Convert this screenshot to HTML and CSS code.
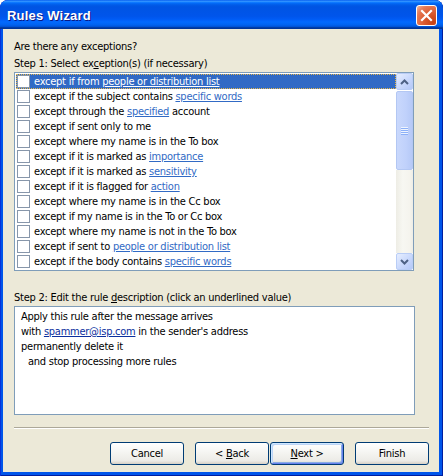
FILE: index.html
```html
<!DOCTYPE html>
<html>
<head>
<meta charset="utf-8">
<title>Rules Wizard</title>
<link rel="stylesheet" href="styles.css">
</head>
<body>
<div class="window">
  <div class="titlebar">
    <span class="title">Rules Wizard</span>
    <div class="close">
      <svg width="13" height="13" viewBox="0 0 13 13"><path d="M2 2 L11 11 M11 2 L2 11" stroke="#fff" stroke-width="2.2" stroke-linecap="square"/></svg>
    </div>
  </div>
  <div class="client">
    <div class="label first">Are there any exceptions?</div>
    <div class="label step1">Step 1: Select ex<u>c</u>eption(s) (if necessary)</div>
    <div class="listbox">
      <ul class="rows">
        <li class="row selected"><span class="check"></span><span class="text">except if from <span class="link">people or distribution list</span></span></li>
        <li class="row"><span class="check"></span><span class="text">except if the subject contains <span class="link">specific words</span></span></li>
        <li class="row"><span class="check"></span><span class="text">except through the <span class="link">specified</span> account</span></li>
        <li class="row"><span class="check"></span><span class="text">except if sent only to me</span></li>
        <li class="row"><span class="check"></span><span class="text">except where my name is in the To box</span></li>
        <li class="row"><span class="check"></span><span class="text">except if it is marked as <span class="link">importance</span></span></li>
        <li class="row"><span class="check"></span><span class="text">except if it is marked as <span class="link">sensitivity</span></span></li>
        <li class="row"><span class="check"></span><span class="text">except if it is flagged for <span class="link">action</span></span></li>
        <li class="row"><span class="check"></span><span class="text">except where my name is in the Cc box</span></li>
        <li class="row"><span class="check"></span><span class="text">except if my name is in the To or Cc box</span></li>
        <li class="row"><span class="check"></span><span class="text">except where my name is not in the To box</span></li>
        <li class="row"><span class="check"></span><span class="text">except if sent to <span class="link">people or distribution list</span></span></li>
        <li class="row"><span class="check"></span><span class="text">except if the body contains <span class="link">specific words</span></span></li>
      </ul>
      <div class="scrollbar">
        <div class="sb-btn">
          <svg width="9" height="6" viewBox="0 0 9 6"><path d="M1 5 L4.5 1.5 L8 5" fill="none" stroke="#4D6185" stroke-width="2"/></svg>
        </div>
        <div class="sb-thumb">
          <div class="grip"><i></i><i></i><i></i><i></i></div>
        </div>
        <div class="sb-track"></div>
        <div class="sb-btn">
          <svg width="9" height="6" viewBox="0 0 9 6"><path d="M1 1 L4.5 4.5 L8 1" fill="none" stroke="#4D6185" stroke-width="2"/></svg>
        </div>
      </div>
    </div>
    <div class="label step2">Step 2: Edit the rule <u>d</u>escription (click an underlined value)</div>
    <div class="desc">
      <div class="dline">Apply this rule after the message arrives</div>
      <div class="dline">with <span class="dlink">spammer@isp.com</span> in the sender's address</div>
      <div class="dline">permanently delete it</div>
      <div class="dline indent">and stop processing more rules</div>
    </div>
    <div class="sep"></div>
    <div class="buttons">
      <div class="btn"><span>Cancel</span></div>
      <div class="btn back"><span>&lt; <u>B</u>ack</span></div>
      <div class="btn next default"><span><u>N</u>ext &gt;</span></div>
      <div class="btn finish"><span>Finish</span></div>
    </div>
  </div>
</div>
</body>
</html>
```
FILE: styles.css
```css
* { box-sizing: border-box; }
html, body { margin: 0; padding: 0; background: #ffffff; }
body {
  font-family: "DejaVu Sans Condensed", "DejaVu Sans", sans-serif;
  font-size: 11px;
  letter-spacing: -0.25px;
  color: #000;
}
.window {
  width: 443px;
  height: 476px;
  display: flex;
  flex-direction: column;
  background: #0055EA;
  border-radius: 8px 8px 0 0;
  overflow: hidden;
  padding: 0 4px 4px 3px;
  box-shadow: inset 1px 0 0 #0831D9, inset -1px 0 0 #001EA0, inset 0 -1px 0 #001EA0;
}
.titlebar {
  height: 29px;
  margin: 0 -4px 0 -3px;
  display: flex;
  align-items: center;
  justify-content: space-between;
  padding: 0 6px 0 7px;
  background: linear-gradient(to bottom, #0058EE 0%, #3593FF 4%, #288EFF 6%, #127DFF 8%, #036FFC 10%, #0262EE 14%, #0057E5 20%, #0054E3 24%, #0055EB 56%, #005BF5 66%, #026AFE 76%, #0062EF 86%, #0052D6 92%, #0040AB 94%, #003092 100%);
  border-radius: 8px 8px 0 0;
}
.title {
  font-family: "Liberation Sans", Arial, sans-serif;
  font-weight: bold;
  font-size: 13px;
  color: #fff;
  text-shadow: 1px 1px 0 #0A1883;
  letter-spacing: 0.2px;
  padding-top: 2px;
}
.close {
  width: 21px;
  height: 21px;
  border: 1px solid #fff;
  border-radius: 3px;
  background: radial-gradient(circle at 85% 85%, #C74012 0%, #DA5A30 40%, #E77A55 75%, #F2B9A0 100%);
  display: flex;
  align-items: center;
  justify-content: center;
  margin-top: 1px;
}
.client {
  flex: 1;
  background: #ECE9D8;
  padding: 11px 10px 0 11px;
  display: flex;
  flex-direction: column;
}
.label { line-height: 13px; height: 13px; white-space: nowrap; }
.step1 { margin-top: 4px; }
.listbox {
  margin-top: 2px;
  width: 400px;
  height: 199px;
  border: 1px solid #7F9DB9;
  background: #fff;
  display: flex;
}
.rows {
  list-style: none;
  margin: 0;
  padding: 1px 0 0 1px;
  flex: 1;
  overflow: hidden;
}
.row {
  height: 15px;
  display: flex;
  align-items: center;
  white-space: nowrap;
  border: 1px solid transparent;
}
.row.selected {
  background: #316AC5;
  color: #fff;
  border: 1px dotted #E6B84A;
}
.check {
  width: 13px;
  height: 13px;
  border: 1px solid #8796AA;
  background: #fff;
  margin-left: 0;
  margin-right: 4px;
  flex: none;
}
.link { color: #316AC5; text-decoration: underline; }
.selected .link { color: #fff; }
.scrollbar {
  width: 17px;
  display: flex;
  flex-direction: column;
  flex: none;
}
.sb-btn {
  height: 17px;
  border: 1px solid #B9CDF6;
  border-radius: 2px;
  background: linear-gradient(135deg, #E6EEFF 0%, #C6D6FC 60%, #B4C8F8 100%);
  display: flex;
  align-items: center;
  justify-content: center;
  flex: none;
}
.sb-thumb {
  height: 79px;
  margin-top: 1px;
  border: 1px solid #B3C7F3;
  border-radius: 2px;
  background: linear-gradient(to right, #C9D8FC 0%, #C0D1FB 60%, #B6C9F7 100%);
  display: flex;
  align-items: center;
  justify-content: center;
  flex: none;
}
.grip { display: flex; flex-direction: column; gap: 1px; }
.grip i { display: block; width: 7px; height: 1px; background: #EEF4FE; box-shadow: 0 1px 0 #8CB0F8; }
.sb-track {
  flex: 1;
  background: linear-gradient(to right, #EEEDE5 0%, #F7F7F2 40%, #F5F4EE 80%, #EEEDE5 100%);
}
.step2 { margin-top: 20px; }
.desc {
  margin-top: 2px;
  width: 401px;
  height: 109px;
  border: 1px solid #7F9DB9;
  background: #fff;
  padding: 2px 6px;
}
.dline { line-height: 15px; height: 15px; white-space: nowrap; }
.dline.indent { padding-left: 7px; }
.dlink { color: #0B2F9E; text-decoration: underline; }
.sep {
  margin-top: 12px;
  width: 415px;
  height: 2px;
  border-top: 1px solid #ACA899;
  border-bottom: 1px solid #fff;
}
.buttons {
  margin-top: 13px;
  width: 415px;
  display: flex;
  justify-content: flex-end;
}
.btn {
  width: 74px;
  height: 23px;
  border: 1px solid #003C74;
  border-radius: 3px;
  background: linear-gradient(to bottom, #FFFFFF 0%, #F6F6F3 40%, #ECEBE6 85%, #D6D0C5 100%);
  display: flex;
  align-items: center;
  justify-content: center;
  line-height: 13px;
  white-space: pre;
}
.back { margin-left: 11px; }
.next { margin-left: 1px; }
.finish { margin-left: 11px; }
.btn.default {
  box-shadow: inset 1px 1px 0 #CEE7FF, inset -1px -1px 0 #6982EE, inset 2px 2px 0 #BCD4F6, inset -2px -2px 0 #89ADE4;
}
```
